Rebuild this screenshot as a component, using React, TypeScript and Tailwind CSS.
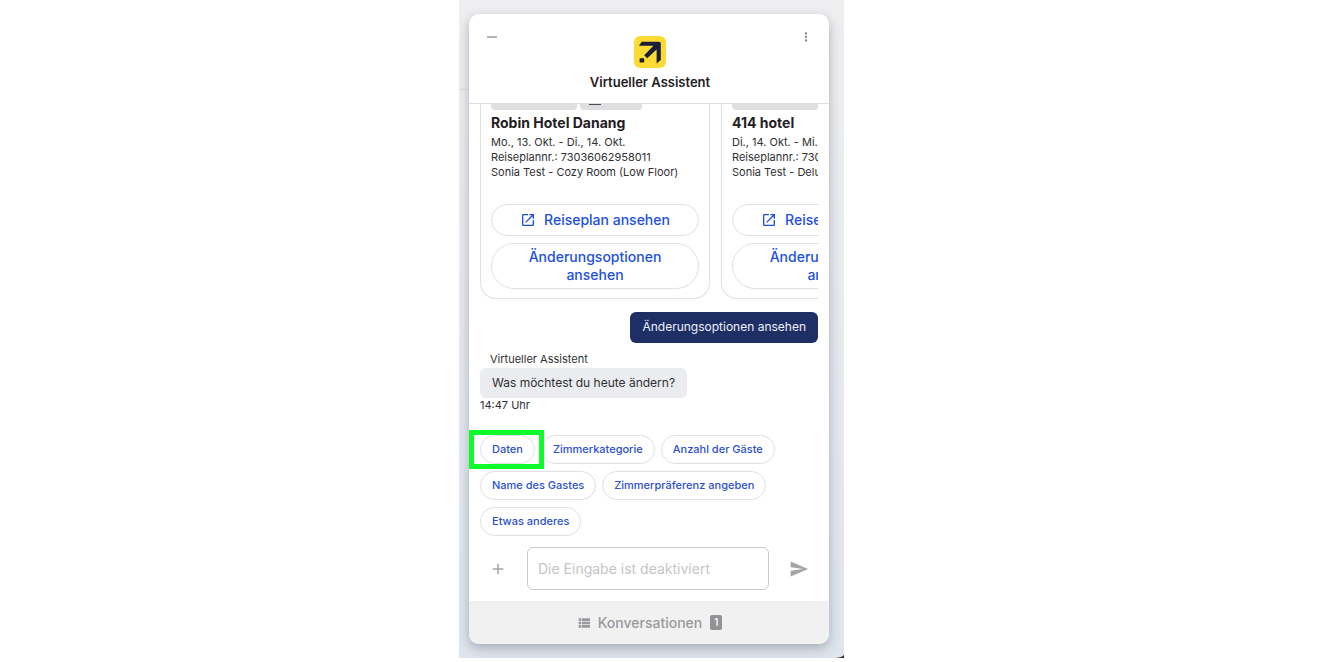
import { MdAdd, MdMoreVert, MdOpenInNew, MdSend } from "react-icons/md";

type Booking = {
    name: string;
    dates: string;
    itinerary: string;
    room: string;
    badges: string[];
};

const bookings: Booking[] = [
    {
        name: "Robin Hotel Danang",
        dates: "Mo., 13. Okt. - Di., 14. Okt.",
        itinerary: "73036062958011",
        room: "Sonia Test - Cozy Room (Low Floor)",
        badges: ["w-[86px]", "w-[62px]"],
    },
    {
        name: "414 hotel",
        dates: "Di., 14. Okt. - Mi., 15. Okt.",
        itinerary: "73036062958011",
        room: "Sonia Test - Deluxe Room",
        badges: ["w-[86px]"],
    },
];

const options = [
    "Daten",
    "Zimmerkategorie",
    "Anzahl der Gäste",
    "Name des Gastes",
    "Zimmerpräferenz angeben",
    "Etwas anderes",
];

const Logo = () => (
    <svg viewBox="0 0 32 32" className="size-8" aria-hidden="true">
        <rect width="32" height="32" rx="6" fill="#fddb32" />
        <path
            d="M7.8 5.8H25c1 0 1.8.8 1.8 1.8V24L22.6 27.4V13.6L13.2 22.2 10.2 19.2 19.4 9.8H4.9z"
            fill="#191e3b"
        />
        <rect x="5.6" y="22.2" width="4.6" height="4.4" rx=".6" fill="#191e3b" />
    </svg>
);

const ListIcon = () => (
    <svg viewBox="0 0 24 24" className="size-4" fill="currentColor" aria-hidden="true">
        <path d="M4 14h4v-4H4v4zm0 5h4v-4H4v4zM4 9h4V5H4v4zm5 5h12v-4H9v4zm0 5h12v-4H9v4zM9 5v4h12V5H9z" />
    </svg>
);

const Header = () => (
    <header className="flex items-start justify-between border-b border-[#dcdddf] pt-4 pr-4 pb-[11px] pl-[18px]">
        <button aria-label="Minimieren" className="flex h-3.5 w-3.5 items-center">
            <span className="h-0.5 w-2.5 bg-[#b4b5b9]" />
        </button>
        <div className="flex flex-col items-center gap-1 pt-1.5">
            <Logo />
            <h1 className="text-[13px] leading-5 font-semibold text-[#1f2024]">Virtueller Assistent</h1>
        </div>
        <button aria-label="Menü" className="text-[#85868b]">
            <MdMoreVert className="size-3.5" />
        </button>
    </header>
);

const BookingCard = ({ booking }: { booking: Booking }) => (
    <article className="w-[230px] shrink-0 rounded-b-2xl border-x border-b border-[#dfe0e4] px-2.5 pb-[9px]">
        <div className="flex gap-[3px]">
            {booking.badges.map((width, i) => (
                <span key={i} className={`flex h-1.5 justify-center rounded-b bg-[#dedfe0] ${width}`}>
                    {i === 1 && <span className="mr-8 h-px w-3 bg-[#4a4b50]" />}
                </span>
            ))}
        </div>
        <h2 className="mt-[3px] text-[14px] leading-5 font-bold text-[#1f2024]">{booking.name}</h2>
        <div className="mt-0.5 text-[11px] leading-[15px] whitespace-nowrap text-[#2f3035]">
            <p>{booking.dates}</p>
            <p>Reiseplannr.: {booking.itinerary}</p>
            <p>{booking.room}</p>
        </div>
        <div className="mt-6 flex flex-col gap-[7px] text-[14px] leading-[18px] font-medium text-[#2150e0]">
            <button className="flex h-8 items-center justify-center gap-2 rounded-full border border-[#dfe0e4]">
                <MdOpenInNew className="size-4" />
                Reiseplan ansehen
            </button>
            <button className="rounded-full border border-[#dfe0e4] px-9 py-1">
                Änderungsoptionen ansehen
            </button>
        </div>
    </article>
);

const App = () => {
    return (
        <main className="flex justify-center bg-white pr-[41px] font-[Inter,sans-serif]">
            <div className="relative w-full max-w-[385px] overflow-hidden bg-linear-to-b from-[#efeff1] to-[#dfe5ec] pt-3.5 pr-[15px] pb-3.5 pl-2.5">
                {/* page edge behind the chat window */}
                <span className="absolute top-[89px] left-0 h-px w-2.5 bg-[#d9dadd]" />
                <svg viewBox="0 0 8 3" className="absolute right-0 bottom-0 h-[3px] w-2" aria-hidden="true">
                    <path d="M0 3Q6 2.4 8 0V3z" fill="#2c2d31" />
                </svg>

                <section className="relative overflow-hidden rounded-[10px] bg-white shadow-[0_4px_12px_rgba(30,40,60,0.3)]">
                    <Header />

                    <div className="px-[11px]">
                        <div className="flex gap-[11px] overflow-hidden">
                            {bookings.map((booking) => (
                                <BookingCard key={booking.name} booking={booking} />
                            ))}
                        </div>

                        <div className="mt-[13px] flex justify-end">
                            <p className="rounded-md bg-[#1e2f66] px-3 pt-[5px] pb-1.5 text-[12px] leading-5 text-[#eef1fa]">
                                Änderungsoptionen ansehen
                            </p>
                        </div>

                        <div className="mt-[9px] flex flex-col items-start text-[11px] leading-[15px] text-[#2f3035]">
                            <span className="px-2.5">Virtueller Assistent</span>
                            <p className="mt-px rounded-md bg-[#ebecef] px-3 py-[5px] text-[12px] leading-5">
                                Was möchtest du heute ändern?
                            </p>
                            <time>14:47 Uhr</time>
                        </div>

                        <div className="mt-[22px] flex flex-wrap gap-x-1.5 gap-y-[7px]">
                            {options.map((option, i) => (
                                <div key={option} className="relative">
                                    <button className="h-[29px] rounded-full border border-[#dfe0e4] px-[11px] text-[11px] font-medium text-[#2b50cf]">
                                        {option}
                                    </button>
                                    {i === 0 && (
                                        <span className="pointer-events-none absolute -inset-y-[5px] -right-[9px] -left-[11px] z-10 border-5 border-[#10fb2c]" />
                                    )}
                                </div>
                            ))}
                        </div>
                    </div>

                    <form className="flex items-center gap-5 py-[11px] pr-5 pl-5">
                        <button type="button" aria-label="Anhang hinzufügen" className="text-[#a3a4a7]">
                            <MdAdd className="size-[18px]" />
                        </button>
                        <input
                            type="text"
                            disabled
                            aria-label="Nachricht"
                            placeholder="Die Eingabe ist deaktiviert"
                            className="h-[43px] min-w-0 flex-1 rounded-md border border-[#c9cacd] px-2.5 text-[14px] placeholder:text-[#c4c5c8]"
                        />
                        <button type="submit" disabled aria-label="Senden" className="text-[#a3a4a7]">
                            <MdSend className="size-5" />
                        </button>
                    </form>

                    <button className="flex h-[43px] w-full items-center justify-center gap-1.5 bg-[#f1f1f2] text-[14px] font-medium text-[#98999c]">
                        <ListIcon />
                        Konversationen
                        <span className="ml-0.5 flex h-[15px] w-3 items-center justify-center rounded-xs bg-[#929396] text-[10px] text-white">
                            1
                        </span>
                    </button>
                </section>
            </div>
        </main>
    );
};

export default App;
